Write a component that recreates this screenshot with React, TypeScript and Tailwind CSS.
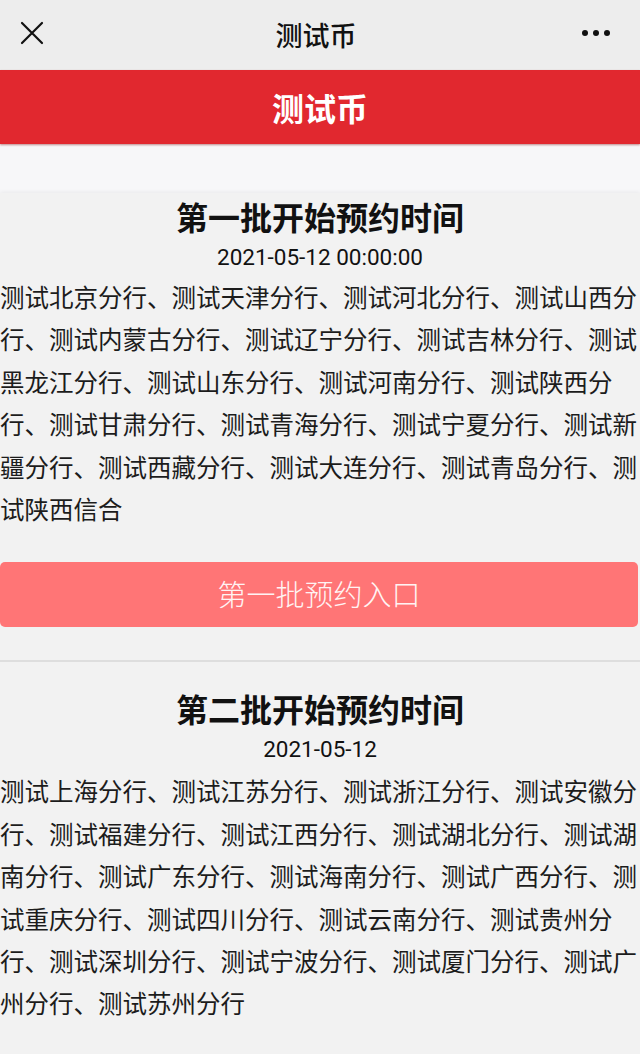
import React from 'react';

const FONT = '"Noto Sans CJK SC", "Noto Sans", sans-serif';

const batches = [
  {
    title: '第一批开始预约时间',
    time: '2021-05-12 00:00:00',
    branches:
      '测试北京分行、测试天津分行、测试河北分行、测试山西分行、测试内蒙古分行、测试辽宁分行、测试吉林分行、测试黑龙江分行、测试山东分行、测试河南分行、测试陕西分行、测试甘肃分行、测试青海分行、测试宁夏分行、测试新疆分行、测试西藏分行、测试大连分行、测试青岛分行、测试陕西信合',
    button: '第一批预约入口',
  },
  {
    title: '第二批开始预约时间',
    time: '2021-05-12',
    branches:
      '测试上海分行、测试江苏分行、测试浙江分行、测试安徽分行、测试福建分行、测试江西分行、测试湖北分行、测试湖南分行、测试广东分行、测试海南分行、测试广西分行、测试重庆分行、测试四川分行、测试云南分行、测试贵州分行、测试深圳分行、测试宁波分行、测试厦门分行、测试广州分行、测试苏州分行',
  },
];

const App: React.FC = () => {
  return (
    <div className="w-[640px] h-[1054px] overflow-hidden bg-[#f7f7f9]" style={{ fontFamily: FONT }}>
      {/* nav bar */}
      <div className="h-[70px] bg-[#ededed] flex items-center justify-between px-[20px]">
        <svg width="24" height="24" viewBox="0 0 24 24" className="mt-[-4px]">
          <path d="M2 2 L22 22 M22 2 L2 22" stroke="#111" strokeWidth="2.2" strokeLinecap="round" />
        </svg>
        <div className="text-[27px] leading-none font-medium text-[#111] mt-[-2px] ml-[6px]">测试币</div>
        <div className="flex gap-[5px] pr-[10px] mt-[-4px]">
          <span className="w-[6px] h-[6px] rounded-full bg-[#111]" />
          <span className="w-[6px] h-[6px] rounded-full bg-[#111]" />
          <span className="w-[6px] h-[6px] rounded-full bg-[#111]" />
        </div>
      </div>

      {/* red banner */}
      <div className="h-[74px] bg-[#e1282f] flex items-center justify-center shadow-[0_1px_2px_rgba(120,0,0,0.45)] relative">
        <span className="text-[32px] font-bold text-white leading-none">测试币</span>
      </div>

      <div className="h-[49px]" />

      <div className="bg-[#f2f2f2] shadow-[0_-1px_4px_rgba(0,0,0,0.06)] h-full">
        {batches.map((b, i) => (
          <div key={i} className={i > 0 ? 'border-t-2 border-[#dedede] pt-[23px]' : ''}>
            <h2 className="text-[32px] font-bold leading-[46px] text-center text-[#111]">{b.title}</h2>
            <div
              className="text-[22.5px] leading-[36px] text-center text-[#111]"
              style={{ fontFamily: 'Roboto, "Noto Sans CJK SC", sans-serif' }}
            >
              {b.time}
            </div>
            <p className={`text-[24.5px] leading-[42.4px] text-[#1c1c1c] ${i === 0 ? 'mt-[1px]' : 'mt-[3px]'}`}>
              {b.branches}
            </p>
            {b.button && (
              <div className="mt-[32px] mb-[33px] pr-[2px]">
                <button className="w-full h-[65px] rounded-[5px] bg-[#ff7576] text-[29px] leading-none font-light text-[#fff3f3] flex items-center justify-center pb-[3px]">
                  {b.button}
                </button>
              </div>
            )}
          </div>
        ))}
      </div>
    </div>
  );
};

export default App;
